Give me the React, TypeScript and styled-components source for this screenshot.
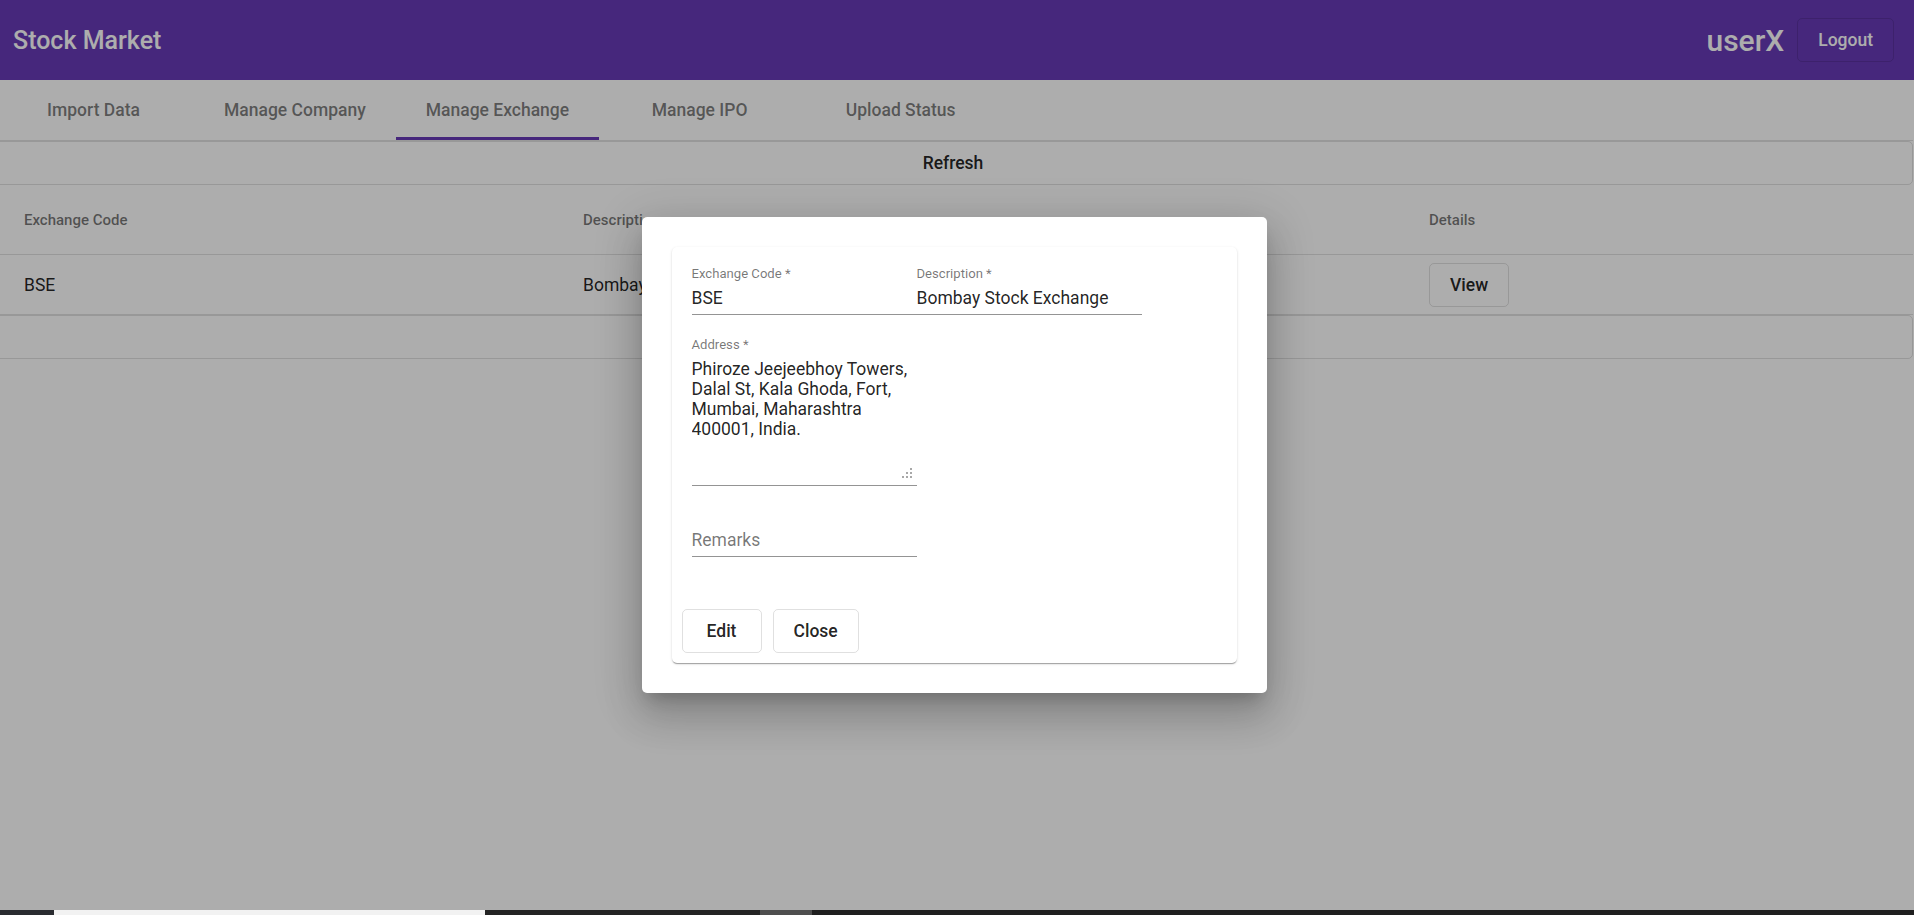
import React from 'react';
import styled, { createGlobalStyle, css } from 'styled-components';

const GlobalStyle = createGlobalStyle`
  html, body {
    margin: 0;
    padding: 0;
    height: 100%;
    overflow: hidden;
  }
  body {
    font-family: Roboto, "Helvetica Neue", "Liberation Sans", sans-serif;
    background: #fff;
  }
  #root {
    height: 100%;
  }
  *, *::before, *::after {
    box-sizing: border-box;
  }
`;

const Shell = styled.div`
  height: 100vh;
  display: flex;
  flex-direction: column;
  overflow: hidden;
`;

const Page = styled.div`
  position: relative;
  flex: 1;
  min-height: 0;
  overflow: hidden;
`;

const Toolbar = styled.header`
  height: 80px;
  display: flex;
  align-items: center;
  padding: 0 20px 0 13px;
  background: #673ab7;
  color: #fff;
`;

const Brand = styled.span`
  font-size: 25px;
  font-weight: 500;
`;

const Spacer = styled.span`
  flex: 1;
`;

const UserName = styled.span`
  font-size: 30px;
  font-weight: 500;
  margin-right: 13px;
`;

const StrokedButton = styled.button<{ $light?: boolean }>`
  height: 44px;
  min-width: 80px;
  padding: 0 20px;
  border: 1px solid rgba(0, 0, 0, 0.12);
  border-radius: 5px;
  background: transparent;
  color: ${p => (p.$light ? '#fff' : 'rgba(0, 0, 0, 0.87)')};
  font-family: inherit;
  font-size: 17.5px;
  font-weight: 500;
  line-height: 42px;
  cursor: pointer;
`;

const WideButton = styled(StrokedButton)`
  display: block;
  width: 100%;
`;

const Main = styled.main`
  margin: 0 1px 0 -7px;
`;

const TabBar = styled.nav`
  display: flex;
  height: 61px;
  border-bottom: 1px solid rgba(0, 0, 0, 0.12);
`;

const Tab = styled.div<{ $active?: boolean }>`
  position: relative;
  min-width: 201px;
  padding: 0 30px;
  display: flex;
  align-items: center;
  justify-content: center;
  font-size: 17.5px;
  font-weight: 500;
  color: rgba(0, 0, 0, 0.52);
  ${p =>
    p.$active &&
    css`
      &::after {
        content: '';
        position: absolute;
        left: 0;
        right: 0;
        bottom: 0;
        height: 3px;
        background: #673ab7;
      }
    `}
`;

const Row = styled.div<{ $header?: boolean }>`
  display: grid;
  grid-template-columns: 559px 846px 1fr;
  align-items: center;
  padding-left: 31px;
  height: ${p => (p.$header ? 70 : 60)}px;
  border-bottom: 1px solid rgba(0, 0, 0, 0.12);
`;

const HeadCell = styled.div`
  font-size: 15px;
  font-weight: 500;
  color: rgba(0, 0, 0, 0.54);
`;

const Cell = styled.div`
  font-size: 17.5px;
  color: rgba(0, 0, 0, 0.87);
  white-space: nowrap;
`;

const Backdrop = styled.div`
  position: absolute;
  inset: 0;
  background: rgba(0, 0, 0, 0.32);
  display: flex;
  align-items: center;
  justify-content: center;
  padding-right: 6px;
`;

const Dialog = styled.div`
  width: 625px;
  padding: 30px;
  background: #fff;
  border-radius: 5px;
  box-shadow: 0 11px 15px -7px rgba(0, 0, 0, 0.2), 0 24px 38px 3px rgba(0, 0, 0, 0.14),
    0 9px 46px 8px rgba(0, 0, 0, 0.12);
`;

const Card = styled.div`
  padding: 19px 20px 10px;
  border-radius: 5px;
  background: #fff;
  box-shadow: 0 2px 1px -1px rgba(0, 0, 0, 0.2), 0 1px 1px 0 rgba(0, 0, 0, 0.14),
    0 1px 3px 0 rgba(0, 0, 0, 0.12);
`;

const FieldRow = styled.div`
  display: flex;
`;

const Field = styled.div`
  width: 225px;
  padding-bottom: 22px;
`;

const FieldLabel = styled.div`
  height: 15px;
  font-size: 13.125px;
  line-height: 15px;
  color: rgba(0, 0, 0, 0.54);
  white-space: nowrap;
`;

const Control = styled.div`
  position: relative;
  margin-top: 7px;
  padding-bottom: 6px;
  border-bottom: 1px solid rgba(0, 0, 0, 0.42);
`;

const TextInput = styled.input`
  display: block;
  width: 100%;
  height: 20px;
  padding: 0;
  border: none;
  outline: none;
  background: transparent;
  font-family: inherit;
  font-size: 17.5px;
  line-height: 20px;
  color: rgba(0, 0, 0, 0.87);

  &::placeholder {
    color: rgba(0, 0, 0, 0.54);
  }
`;

const TextArea = styled.textarea`
  display: block;
  width: 100%;
  height: 120px;
  padding: 0;
  border: none;
  outline: none;
  resize: none;
  overflow: hidden;
  background: transparent;
  font-family: inherit;
  font-size: 17.5px;
  line-height: 20px;
  color: rgba(0, 0, 0, 0.87);
`;

const Grip = styled.svg`
  position: absolute;
  right: 4px;
  bottom: 6px;
`;

const Actions = styled.div`
  display: flex;
  gap: 11px;
  margin: 30px 0 0 -10px;
`;

const Taskbar = styled.div`
  height: 5px;
  display: flex;
  background: #222326;
`;

const TaskSegment = styled.div<{ $width?: number; $color: string }>`
  ${p => (p.$width ? `width: ${p.$width}px;` : 'flex: 1;')}
  background: ${p => p.$color};
`;

const tabs = ['Import Data', 'Manage Company', 'Manage Exchange', 'Manage IPO', 'Upload Status'];

const address = 'Phiroze Jeejeebhoy Towers, Dalal St, Kala Ghoda, Fort, Mumbai, Maharashtra 400001, India.';

const ResizeGrip = () => (
  <Grip width="11" height="11" viewBox="0 0 11 11">
    {[
      [8, 0],
      [4, 4],
      [8, 4],
      [0, 8],
      [4, 8],
      [8, 8],
    ].map(([x, y]) => (
      <rect key={`${x}-${y}`} x={x} y={y} width="2" height="2" fill="#a8a8a8" />
    ))}
  </Grip>
);

const ExchangeDialog: React.FC = () => (
  <Dialog>
    <Card>
      <FieldRow>
        <Field>
          <FieldLabel>Exchange Code *</FieldLabel>
          <Control>
            <TextInput readOnly value="BSE" />
          </Control>
        </Field>
        <Field>
          <FieldLabel>Description *</FieldLabel>
          <Control>
            <TextInput readOnly value="Bombay Stock Exchange" />
          </Control>
        </Field>
      </FieldRow>
      <Field>
        <FieldLabel>Address *</FieldLabel>
        <Control>
          <TextArea readOnly value={address} />
          <ResizeGrip />
        </Control>
      </Field>
      <Field>
        <FieldLabel />
        <Control>
          <TextInput readOnly placeholder="Remarks" />
        </Control>
      </Field>
      <Actions>
        <StrokedButton>Edit</StrokedButton>
        <StrokedButton>Close</StrokedButton>
      </Actions>
    </Card>
  </Dialog>
);

export default function App() {
  return (
    <>
      <GlobalStyle />
      <Shell>
        <Page>
          <Toolbar>
            <Brand>Stock Market</Brand>
            <Spacer />
            <UserName>userX</UserName>
            <StrokedButton $light>Logout</StrokedButton>
          </Toolbar>
          <Main>
            <TabBar>
              {tabs.map(t => (
                <Tab key={t} $active={t === 'Manage Exchange'}>
                  {t}
                </Tab>
              ))}
            </TabBar>
            <WideButton>Refresh</WideButton>
            <Row $header>
              <HeadCell>Exchange Code</HeadCell>
              <HeadCell>Description</HeadCell>
              <HeadCell>Details</HeadCell>
            </Row>
            <Row>
              <Cell>BSE</Cell>
              <Cell>Bombay Stock Exchange</Cell>
              <Cell>
                <StrokedButton>View</StrokedButton>
              </Cell>
            </Row>
            <WideButton aria-label="more" />
          </Main>
          <Backdrop>
            <ExchangeDialog />
          </Backdrop>
        </Page>
        <Taskbar>
          <TaskSegment $width={54} $color="#2a2c30" />
          <TaskSegment $width={431} $color="#f2f2f2" />
          <TaskSegment $width={275} $color="#232323" />
          <TaskSegment $width={52} $color="#4e4e4e" />
          <TaskSegment $color="#1f1f1f" />
        </Taskbar>
      </Shell>
    </>
  );
}
